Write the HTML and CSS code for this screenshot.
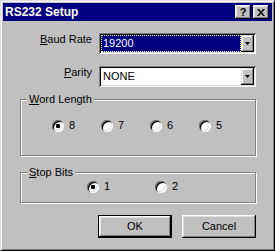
FILE: index.html
```html
<!DOCTYPE html>
<html lang="en">
<head>
  <meta charset="UTF-8" />
  <title>RS232 Setup</title>
  <link rel="stylesheet" href="styles.css">
</head>
<body>
  <div class="window">
    <div class="titlebar">
      <span class="title">RS232 Setup</span>
      <div class="title-buttons">
        <span class="tbtn">?</span>
        <span class="tbtn">
          <svg width="8" height="7" viewBox="0 0 8 7"><path d="M0 0h2l2 2.5 2-2.5h2l-3 3.5 3 3.5h-2l-2-2.5-2 2.5h-2l3-3.5z" fill="#000"/></svg>
        </span>
      </div>
    </div>

    <div class="content">
      <div class="field-row">
        <span class="field-label"><u>B</u>aud Rate</span>
        <div class="combo">
          <div class="combo-value selected">19200</div>
          <div class="combo-btn"><svg width="5" height="3" viewBox="0 0 5 3"><path d="M0 0h5l-2.5 3z" fill="#000"/></svg></div>
        </div>
      </div>
      <div class="field-row">
        <span class="field-label"><u>P</u>arity</span>
        <div class="combo">
          <div class="combo-value">NONE</div>
          <div class="combo-btn"><svg width="5" height="3" viewBox="0 0 5 3"><path d="M0 0h5l-2.5 3z" fill="#000"/></svg></div>
        </div>
      </div>

      <div class="group words">
        <div class="legend"><u>W</u>ord Length</div>
        <div class="radios">
          <span class="radio"><span class="dot checked"></span>8</span>
          <span class="radio"><span class="dot"></span>7</span>
          <span class="radio"><span class="dot"></span>6</span>
          <span class="radio"><span class="dot"></span>5</span>
        </div>
      </div>

      <div class="group stops">
        <div class="legend"><u>S</u>top Bits</div>
        <div class="radios">
          <span class="radio"><span class="dot checked"></span>1</span>
          <span class="radio"><span class="dot"></span>2</span>
        </div>
      </div>

      <div class="actions">
        <span class="btn default">OK</span>
        <span class="btn">Cancel</span>
      </div>
    </div>
  </div>
</body>
</html>
```

FILE: styles.css
```css
html, body {
  margin: 0;
  padding: 0;
}
body {
  background: #c0c0c0;
  font-family: "Liberation Sans", Arial, sans-serif;
  font-size: 11px;
  line-height: 13px;
  color: #000;
}

.window {
  width: 275px;
  height: 251px;
  box-sizing: border-box;
  padding: 2px;
  border: 1px solid;
  border-color: #dfdfdf #000 #000 #dfdfdf;
  box-shadow: inset 1px 1px #fff, inset -1px -1px #808080;
  background: #c0c0c0;
}

.titlebar {
  height: 18px;
  background: #000080;
  color: #fff;
  display: flex;
  align-items: center;
  justify-content: space-between;
  padding: 0 3px 0 2px;
}
.title {
  font-weight: bold;
  font-size: 12px;
}
.title-buttons {
  display: flex;
  gap: 2px;
}
.tbtn {
  width: 16px;
  height: 14px;
  background: #c0c0c0;
  box-shadow: inset -1px -1px #000, inset 1px 1px #fff, inset -2px -2px #808080, inset 2px 2px #dfdfdf;
  display: flex;
  align-items: center;
  justify-content: center;
  color: #000;
  font-weight: bold;
  font-size: 11px;
}

.content {
  padding: 12px 16px 0 17px;
}

.field-row {
  display: grid;
  grid-template-columns: 1fr 157px;
  column-gap: 7px;
  align-items: start;
}
.field-row + .field-row { margin-top: 12px; }
.field-label {
  text-align: right;
  padding-top: 0;
}

.combo {
  height: 21px;
  box-sizing: border-box;
  padding: 2px;
  background: #fff;
  box-shadow: inset 1px 1px #808080, inset -1px -1px #fff, inset 2px 2px #000, inset -2px -2px #dfdfdf;
  display: flex;
}
.combo-value {
  flex: 1;
  display: flex;
  align-items: center;
  padding-left: 2px;
}
.combo-value.selected {
  background: #000080;
  color: #fff;
  outline: 1px dotted #ffffa0;
  outline-offset: -1px;
}
.combo-btn {
  width: 13px;
  background: #c0c0c0;
  box-shadow: inset -1px -1px #000, inset 1px 1px #dfdfdf, inset -2px -2px #808080, inset 2px 2px #fff;
  display: flex;
  align-items: center;
  justify-content: center;
}

.group {
  margin-top: 12px;
  box-sizing: border-box;
  border: 1px solid #808080;
  box-shadow: 1px 1px 0 #fff, inset 1px 1px 0 #fff;
}
.group.words { height: 57px; }
.group.stops { height: 31px; margin-top: 16px; }

.legend {
  width: max-content;
  margin: -7px 0 0 6px;
  padding: 0 2px;
  background: #c0c0c0;
}

.radios {
  display: flex;
  height: 13px;
}
.words .radios { margin-top: 13px; padding-left: 31px; }
.stops .radios { margin-top: 1px; padding-left: 66px; }
.radio {
  display: flex;
  align-items: center;
  gap: 5px;
}
.words .radio { width: 49px; }
.stops .radio { width: 68px; }

.dot {
  position: relative;
  width: 12px;
  height: 12px;
  border-radius: 50%;
  background: #fff;
  box-shadow: inset 1px 1px 0 #808080, inset -1px -1px 0 #fff, inset 2px 2px 0 #000, inset -2px -2px 0 #dfdfdf;
}
.dot.checked::after {
  content: "";
  position: absolute;
  left: 4px;
  top: 4px;
  width: 4px;
  height: 4px;
  border-radius: 1px;
  background: #000;
}

.actions {
  display: flex;
  justify-content: flex-end;
  gap: 10px;
  margin-top: 12px;
}
.btn {
  width: 74px;
  height: 23px;
  box-sizing: border-box;
  display: flex;
  align-items: center;
  justify-content: center;
  box-shadow: inset -1px -1px #000, inset 1px 1px #fff, inset -2px -2px #808080, inset 2px 2px #dfdfdf;
}
.btn.default {
  border: 1px solid #000;
}
```
